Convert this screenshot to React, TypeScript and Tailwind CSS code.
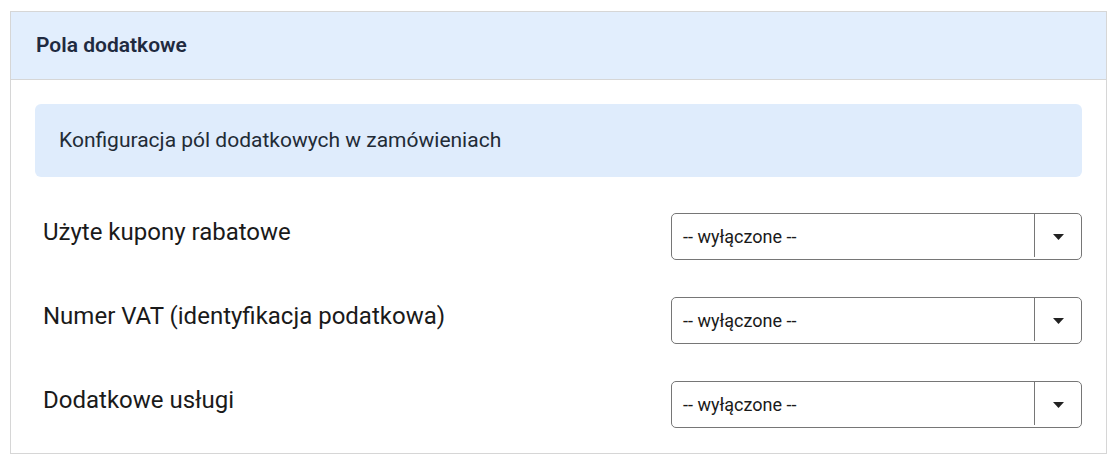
import React from "react";

const fields = [
  "Użyte kupony rabatowe",
  "Numer VAT (identyfikacja podatkowa)",
  "Dodatkowe usługi",
];

const SelectBox: React.FC = () => (
  <div className="flex h-[47px] w-[411px] items-stretch rounded-[5px] border border-[#767676] bg-white">
    <div className="flex flex-1 items-center pl-[11px] text-[18px] text-[#1a1a1a]">
      -- wyłączone --
    </div>
    <div className="mb-[2px] w-px bg-[#767676]" />
    <div className="flex w-[46px] items-center justify-center">
      <svg width="11" height="6" viewBox="0 0 11 6">
        <path d="M0 0 L11 0 L5.5 6 Z" fill="#222" />
      </svg>
    </div>
  </div>
);

export default function App() {
  return (
    <div className="min-h-screen bg-white pt-[11px] pl-[10px] font-['Roboto',sans-serif]">
      <div className="w-[1097px] border border-[#d6d6d6] bg-white">
        {/* Header */}
        <div className="flex h-[68px] items-center border-b border-[#d6d6d6] bg-[#e2eefd] px-[25px]">
          <h2 className="text-[21px] font-semibold text-[#1f2a40]">Pola dodatkowe</h2>
        </div>

        <div className="px-6 pt-6 pb-[25px]">
          {/* Info */}
          <div className="flex h-[73px] items-center rounded-[6px] bg-[#dfecfc] px-6 text-[21px] text-[#222b36]">
            Konfiguracja pól dodatkowych w zamówieniach
          </div>

          {/* Fields */}
          <div className="mt-[36px] flex flex-col gap-[37px]">
            {fields.map((label) => (
              <div key={label} className="flex items-center justify-between">
                <span className="-mt-[9px] pl-2 text-[24px] text-[#1a1a1a]">{label}</span>
                <SelectBox />
              </div>
            ))}
          </div>
        </div>
      </div>
    </div>
  );
}
